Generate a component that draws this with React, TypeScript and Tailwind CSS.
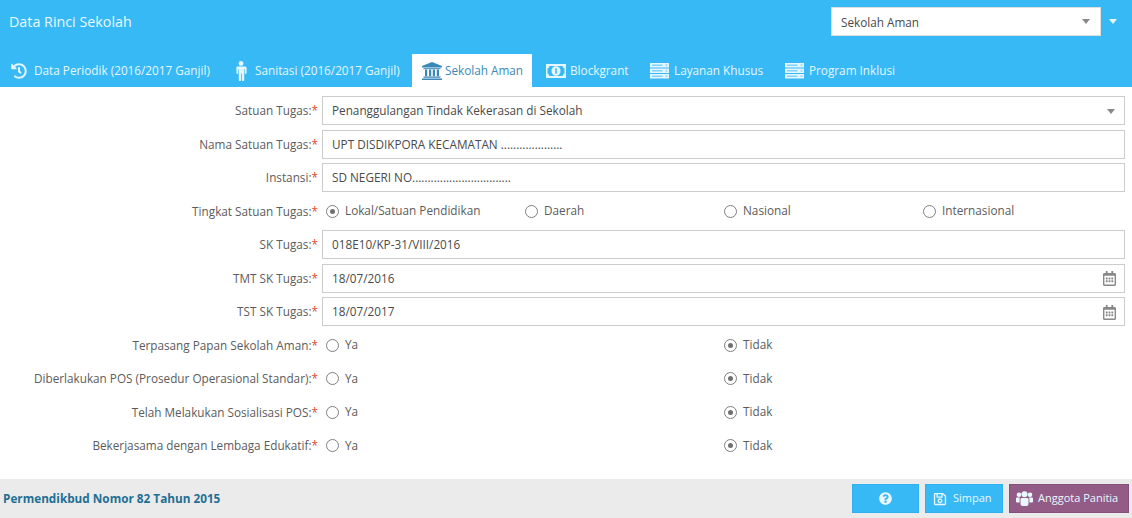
import React from 'react';
import { FaHistory, FaQuestionCircle, FaRegSave, FaRegCalendarAlt } from 'react-icons/fa';

const MaleIcon = () => (
  <svg viewBox="0 0 12 20" className="w-[12px] h-[20px]" fill="currentColor">
    <circle cx="6" cy="2.4" r="2.4" />
    <path d="M2 5.5h8a1.6 1.6 0 0 1 1.6 1.6v5a.9.9 0 0 1-1.8 0V8h-.6v11a1 1 0 0 1-2.3 0v-6.5h-.8V19a1 1 0 0 1-2.3 0V8h-.6v4.1a.9.9 0 0 1-1.8 0v-5A1.6 1.6 0 0 1 2 5.5z" />
  </svg>
);

const BankIcon = () => (
  <svg viewBox="0 0 20 18" className="w-[20px] h-[18px]" fill="currentColor">
    <path d="M10 0l10 4v1.5H0V4z" />
    <path d="M1.5 6.2h17v1h-17z" />
    <path d="M3 7.6h2.2v6.6H3zM7 7.6h2.2v6.6H7zM10.8 7.6H13v6.6h-2.2zM14.8 7.6H17v6.6h-2.2z" />
    <path d="M1.5 14.6h17v1.2h-17zM0 16.4h20V18H0z" />
  </svg>
);

const MoneyIcon = () => (
  <svg viewBox="0 0 20 14" className="w-[20px] h-[14px]">
    <path fill="#e6f6fd" fillRule="evenodd" d="M0 0h20v14H0zM3.5 2Q3 4 1.5 4.500v5Q3 10 3.500 12h13q.5-2 2-2.500v-5Q17 4 16.500 2z" />
    <ellipse cx="10" cy="7" rx="4.500" ry="4.800" fill="#e6f6fd" />
    <rect x="9.300" y="4.300" width="1.500" height="5.400" fill="#37b9f6" />
  </svg>
);

const ServerIcon = () => (
  <svg viewBox="0 0 19 16" className="w-[19px] h-[16px]">
    {[0, 5.500, 11].map((y) => (
      <g key={y}>
        <rect x="0" y={y} width="19" height="4.500" fill="#e6f6fd" />
        <rect x="2" y={y + 1.500} width="10.500" height="1.500" fill="#7fd3f9" />
        <rect x="15.500" y={y + 1.200} width="2" height="2" fill="#9adcfa" />
      </g>
    ))}
  </svg>
);

const UsersIcon = () => (
  <svg viewBox="0 0 17 15" className="w-[17px] h-[15px]" fill="currentColor">
    <circle cx="8.500" cy="3.200" r="3" />
    <circle cx="3" cy="3.800" r="2.300" />
    <circle cx="14" cy="3.800" r="2.300" />
    <path d="M4.500 8.200Q4.500 7 6 7h5q1.500 0 1.500 1.200V13q0 2-2 2h-4q-2 0-2-2z" />
    <path d="M0 7.500Q0 6.600 1 6.600h3Q3.600 7.200 3.600 8.400V11.500H1Q0 11.500 0 10.500zM17 7.500Q17 6.600 16 6.600h-3q.4.600.4 1.800v3.100H16q1 0 1-1z" />
  </svg>
);

const tabs = [
  { label: 'Data Periodik (2016/2017 Ganjil)', icon: <FaHistory className="w-[16px] h-[16px]" />, box: 'w-[222px] pl-[11px] gap-[7px]' },
  { label: 'Sanitasi (2016/2017 Ganjil)', icon: <MaleIcon />, box: 'w-[190px] pl-[13px] gap-[8px]' },
  { label: 'Sekolah Aman', icon: <BankIcon />, box: 'w-[120px] pl-[10px] gap-[3px]', active: true },
  { label: 'Blockgrant', icon: <MoneyIcon />, box: 'w-[104px] pl-[14px] gap-[4px]' },
  { label: 'Layanan Khusus', icon: <ServerIcon />, box: 'w-[135px] pl-[14px] gap-[5px]' },
  { label: 'Program Inklusi', icon: <ServerIcon />, box: 'w-[130px] pl-[14px] gap-[5px]' },
];

const Caret = ({ className }: { className: string }) => (
  <span className={`w-0 h-0 border-x-[4.5px] border-x-transparent border-t-[5px] ${className}`} />
);

const Label = ({ text }: { text: string }) => (
  <div className="w-[318px] shrink-0 text-right text-[#5c5c5c] leading-[17px]">
    {text}:<span className="text-[#e2492f]">*</span>
  </div>
);

const Box = ({ children }: { children: React.ReactNode }) => (
  <div className="ml-[4px] w-[803px] h-[29px] border border-[#cccccc] bg-white flex items-center justify-between pl-[9px] pr-[8px] pt-[1px] text-[#4a4a4a]">
    {children}
  </div>
);

const Radio = ({ text, checked, width }: { text: string; checked?: boolean; width: string }) => (
  <div className={`flex items-center ${width}`}>
    <span className="w-[13px] h-[13px] rounded-full border-[1.5px] border-[#808080] flex items-center justify-center shrink-0">
      {checked && <span className="w-[5px] h-[5px] rounded-full bg-[#707070]" />}
    </span>
    <span className="ml-[6px] text-[#5c5c5c]">{text}</span>
  </div>
);

const InputRow = ({ label, value, calendar }: { label: string; value: string; calendar?: boolean }) => (
  <div className="flex items-center h-[33.5px] pb-[4px]">
    <Label text={label} />
    <Box>
      <span>{value}</span>
      {calendar && <FaRegCalendarAlt className="w-[13px] h-[15px] text-[#888888]" />}
    </Box>
  </div>
);

const SelectRow = ({ label, value }: { label: string; value: string }) => (
  <div className="flex items-center h-[33.5px] pb-[4px]">
    <Label text={label} />
    <Box>
      <span>{value}</span>
      <Caret className="border-t-[#888888] mr-[1px]" />
    </Box>
  </div>
);

const YesNoRow = ({ label }: { label: string }) => (
  <div className="flex items-center h-[33.5px] pb-[4px]">
    <Label text={label} />
    <div className="ml-[8px] flex">
      <Radio text="Ya" width="w-[398px]" />
      <Radio text="Tidak" checked width="w-[200px]" />
    </div>
  </div>
);

const App: React.FC = () => {
  return (
    <div className="w-[1132px] h-[518px] bg-white flex flex-col overflow-hidden font-['Open_Sans',sans-serif] text-[11.75px]">
      <div className="h-[87px] shrink-0 bg-[#37b9f6] flex flex-col">
        <div className="h-[54px] flex items-start justify-between pl-[9px] pr-[15px]">
          <div className="mt-[12px] text-[14.3px] leading-[20px] text-[#eaf8fe]">Data Rinci Sekolah</div>
          <div className="mt-[7px] flex items-center">
            <div className="w-[270px] h-[29px] bg-white border border-[#dddddd] flex items-center justify-between pl-[9px] pr-[10px] pt-[2px] text-[#4a4a4a]">
              <span>Sekolah Aman</span>
              <Caret className="border-t-[#888888] -mt-[2px]" />
            </div>
            <Caret className="ml-[8px] border-t-[#e6f6fd]" />
          </div>
        </div>
        <div className="h-[33px] flex items-stretch">
          {tabs.map((tab) => (
            <div
              key={tab.label}
              className={`flex items-center ${tab.box} ${tab.active ? 'bg-white text-[#3a88b8]' : 'text-[#e6f6fd]'}`}
            >
              {tab.icon}
              <span className="pt-[1px]">{tab.label}</span>
            </div>
          ))}
        </div>
      </div>

      <div className="flex-1 pt-[9px]">
        <SelectRow label="Satuan Tugas" value="Penanggulangan Tindak Kekerasan di Sekolah" />
        <InputRow label="Nama Satuan Tugas" value="UPT DISDIKPORA KECAMATAN ...................." />
        <InputRow label="Instansi" value="SD NEGERI NO................................" />
        <div className="flex items-center h-[33.5px] pb-[4px]">
          <Label text="Tingkat Satuan Tugas" />
          <div className="ml-[8px] flex">
            <Radio text="Lokal/Satuan Pendidikan" checked width="w-[199px]" />
            <Radio text="Daerah" width="w-[199px]" />
            <Radio text="Nasional" width="w-[199px]" />
            <Radio text="Internasional" width="w-[199px]" />
          </div>
        </div>
        <InputRow label="SK Tugas" value="018E10/KP-31/VIII/2016" />
        <InputRow label="TMT SK Tugas" value="18/07/2016" calendar />
        <InputRow label="TST SK Tugas" value="18/07/2017" calendar />
        <YesNoRow label="Terpasang Papan Sekolah Aman" />
        <YesNoRow label="Diberlakukan POS (Prosedur Operasional Standar)" />
        <YesNoRow label="Telah Melakukan Sosialisasi POS" />
        <YesNoRow label="Bekerjasama dengan Lembaga Edukatif" />
      </div>

      <div className="h-[39px] shrink-0 bg-[#ebebeb] flex items-center justify-between pl-[3px] pr-[3px]">
        <div className="font-bold text-[#1f6f93]">Permendikbud Nomor 82 Tahun 2015</div>
        <div className="flex gap-[6px] text-[11px] text-[#eaf8fe]">
          <div className="w-[67px] h-[29px] bg-[#37b9f6] border border-[#2fb0ee] flex items-center justify-center">
            <FaQuestionCircle className="w-[13px] h-[13px]" />
          </div>
          <div className="w-[78px] h-[29px] bg-[#37b9f6] border border-[#2fb0ee] flex items-center pl-[7px] gap-[6px]">
            <FaRegSave className="w-[14px] h-[14px]" />
            <span>Simpan</span>
          </div>
          <div className="w-[120px] h-[29px] bg-[#925c87] border border-[#84507a] flex items-center pl-[6px] gap-[5px]">
            <UsersIcon />
            <span>Anggota Panitia</span>
          </div>
        </div>
      </div>
    </div>
  );
};

export default App;
